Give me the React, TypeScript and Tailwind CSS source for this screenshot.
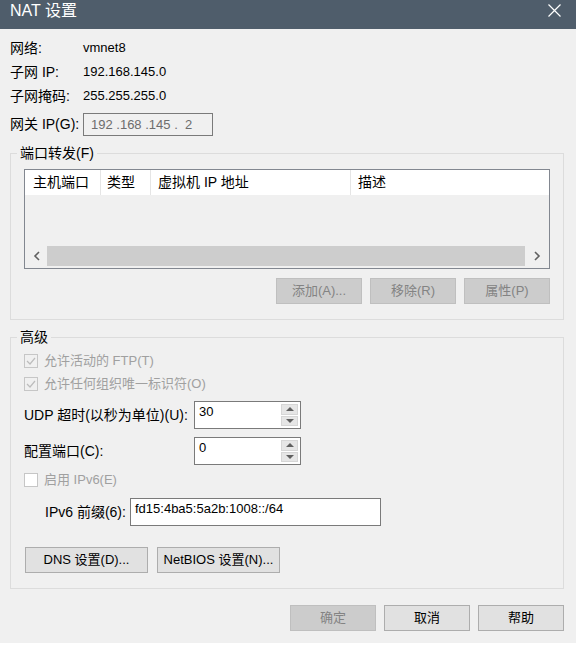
import React from "react";

const font = "font-['Liberation_Sans','Noto_Sans_CJK_SC',sans-serif]";

function Btn({ label, disabled, w = "w-[86px]" }: { label: string; disabled?: boolean; w?: string }) {
  return (
    <div
      className={`${w} h-[26px] flex items-center justify-center border text-[13px] ${
        disabled ? "bg-[#cccccc] border-[#bfbfbf] text-[#838383]" : "bg-[#e1e1e1] border-[#adadad] text-black"
      }`}
    >
      {label}
    </div>
  );
}

function Check({ checked, label }: { checked?: boolean; label: string }) {
  return (
    <div className="flex items-center gap-[6px] text-[#a0a0a0] text-[13px]">
      <div
        className={`w-[14px] h-[14px] border border-[#c6c6c6] flex items-center justify-center ${
          checked ? "bg-[#f0f0f0]" : "bg-white"
        }`}
      >
        {checked && (
          <svg width="10" height="8" viewBox="0 0 10 8">
            <path d="M1 4 L4 7 L9 1" fill="none" stroke="#bcbcbc" strokeWidth="1.2" />
          </svg>
        )}
      </div>
      <span>{label}</span>
    </div>
  );
}

function Spin({ value }: { value: string }) {
  return (
    <div className="w-[107px] h-[28px] border border-[#7a7a7a] bg-white flex">
      <div className="flex-1 pl-[4px] pt-[2px] text-[13px] leading-[16px]">{value}</div>
      <div className="w-[19px] flex flex-col gap-[1px] p-[2px] pl-0">
        {["M1 5 L5 1 L9 5 Z", "M1 1 L5 5 L9 1 Z"].map((d) => (
          <div key={d} className="flex-1 bg-[#e6e6e6] border border-[#d6d6d6] flex items-center justify-center">
            <svg width="10" height="6" viewBox="0 0 10 6">
              <path d={d} fill="#606060" />
            </svg>
          </div>
        ))}
      </div>
    </div>
  );
}

function Group({ title, children }: { title: string; children: React.ReactNode }) {
  return (
    <fieldset className="w-[554px] border border-[#dcdcdc] pl-[13px]">
      <legend className="-ml-[7px] px-[3px] h-[18px] leading-[18px] text-[14px] text-black">{title}</legend>
      {children}
    </fieldset>
  );
}

export default function App() {
  return (
    <div className={`w-[576px] h-[650px] bg-white ${font}`}>
      <div className="h-[643px] bg-[#f0f0f0] flex flex-col">
        <div className="h-[29px] bg-[#4f5d6b] flex items-start justify-between pl-[10px] pr-[15px] pt-[2px]">
          <span className="text-white text-[16px] leading-[18px]">NAT 设置</span>
          <svg className="mt-[2px]" width="13" height="13" viewBox="0 0 13 13">
            <path d="M0.5 0.5 L12.5 12.5 M12.5 0.5 L0.5 12.5" stroke="white" strokeWidth="1.2" />
          </svg>
        </div>

        <div className="pt-[7px] pl-[10px] text-[13px] text-black">
          {[
            ["网络:", "vmnet8"],
            ["子网 IP:", "192.168.145.0"],
            ["子网掩码:", "255.255.255.0"],
          ].map(([k, v]) => (
            <div key={k} className="h-[24px] flex items-center">
              <span className="w-[73px] text-[14px]">{k}</span>
              <span>{v}</span>
            </div>
          ))}
          <div className="mt-[5px] h-[23px] flex items-center">
            <span className="w-[73px] text-[14px]">网关 IP(G):</span>
            <div className="w-[130px] h-[23px] border border-[#7a7a7a] flex items-center pl-[7px] text-[#6d6d6d] whitespace-pre">
              192 .168 .145 .  2
            </div>
          </div>

          <div className="mt-[8px]">
            <Group title="端口转发(F)">
              <div className="mt-[7px] w-[526px] h-[100px] border border-[#828790] flex flex-col">
                <div className="h-[25px] bg-white flex text-[14px]">
                  <div className="w-[76px] pl-[8px] border-r border-[#e5e5e5] flex items-center">主机端口</div>
                  <div className="w-[50px] pl-[6px] border-r border-[#e5e5e5] flex items-center">类型</div>
                  <div className="w-[200px] pl-[7px] border-r border-[#e5e5e5] flex items-center">虚拟机 IP 地址</div>
                  <div className="flex-1 pl-[7px] flex items-center">描述</div>
                </div>
                <div className="flex-1" />
                <div className="h-[20px] mb-[2px] flex items-center">
                  <div className="w-[22px] flex justify-center">
                    <svg width="7" height="10" viewBox="0 0 7 10">
                      <path d="M6 1 L2 5 L6 9" fill="none" stroke="#606060" strokeWidth="1.6" />
                    </svg>
                  </div>
                  <div className="flex-1 h-full bg-[#cdcdcd]" />
                  <div className="w-[24px] flex justify-center">
                    <svg width="7" height="10" viewBox="0 0 7 10">
                      <path d="M1 1 L5 5 L1 9" fill="none" stroke="#606060" strokeWidth="1.6" />
                    </svg>
                  </div>
                </div>
              </div>
              <div className="mt-[9px] w-[526px] flex justify-end gap-[8px] pb-[15px]">
                <Btn label="添加(A)..." disabled />
                <Btn label="移除(R)" disabled />
                <Btn label="属性(P)" disabled />
              </div>
            </Group>
          </div>

          <div className="mt-[8px]">
            <Group title="高级">
              <div className="mt-[4px] h-[22px] flex items-center">
                <Check checked label="允许活动的 FTP(T)" />
              </div>
              <div className="h-[23px] flex items-center">
                <Check checked label="允许任何组织唯一标识符(O)" />
              </div>
              <div className="mt-[6px] flex items-center">
                <span className="w-[170px] text-[14px]">UDP 超时(以秒为单位)(U):</span>
                <Spin value="30" />
              </div>
              <div className="mt-[8px] flex items-center">
                <span className="w-[170px] text-[14px]">配置端口(C):</span>
                <Spin value="0" />
              </div>
              <div className="mt-[4px] h-[22px] flex items-center">
                <Check label="启用 IPv6(E)" />
              </div>
              <div className="mt-[7px] flex items-center">
                <span className="w-[106px] pl-[21px] text-[14px]">IPv6 前缀(6):</span>
                <div className="w-[251px] h-[28px] border border-[#7a7a7a] bg-white pl-[4px] pt-[2px] leading-[16px]">
                  fd15:4ba5:5a2b:1008::/64
                </div>
              </div>
              <div className="mt-[21px] pl-[1px] flex gap-[9px] pb-[15px]">
                <Btn label="DNS 设置(D)..." w="w-[123px]" />
                <Btn label="NetBIOS 设置(N)..." w="w-[123px]" />
              </div>
            </Group>
          </div>

          <div className="mt-[16px] w-[554px] flex justify-end gap-[8px]">
            <Btn label="确定" disabled />
            <Btn label="取消" />
            <Btn label="帮助" />
          </div>
        </div>
      </div>
    </div>
  );
}
